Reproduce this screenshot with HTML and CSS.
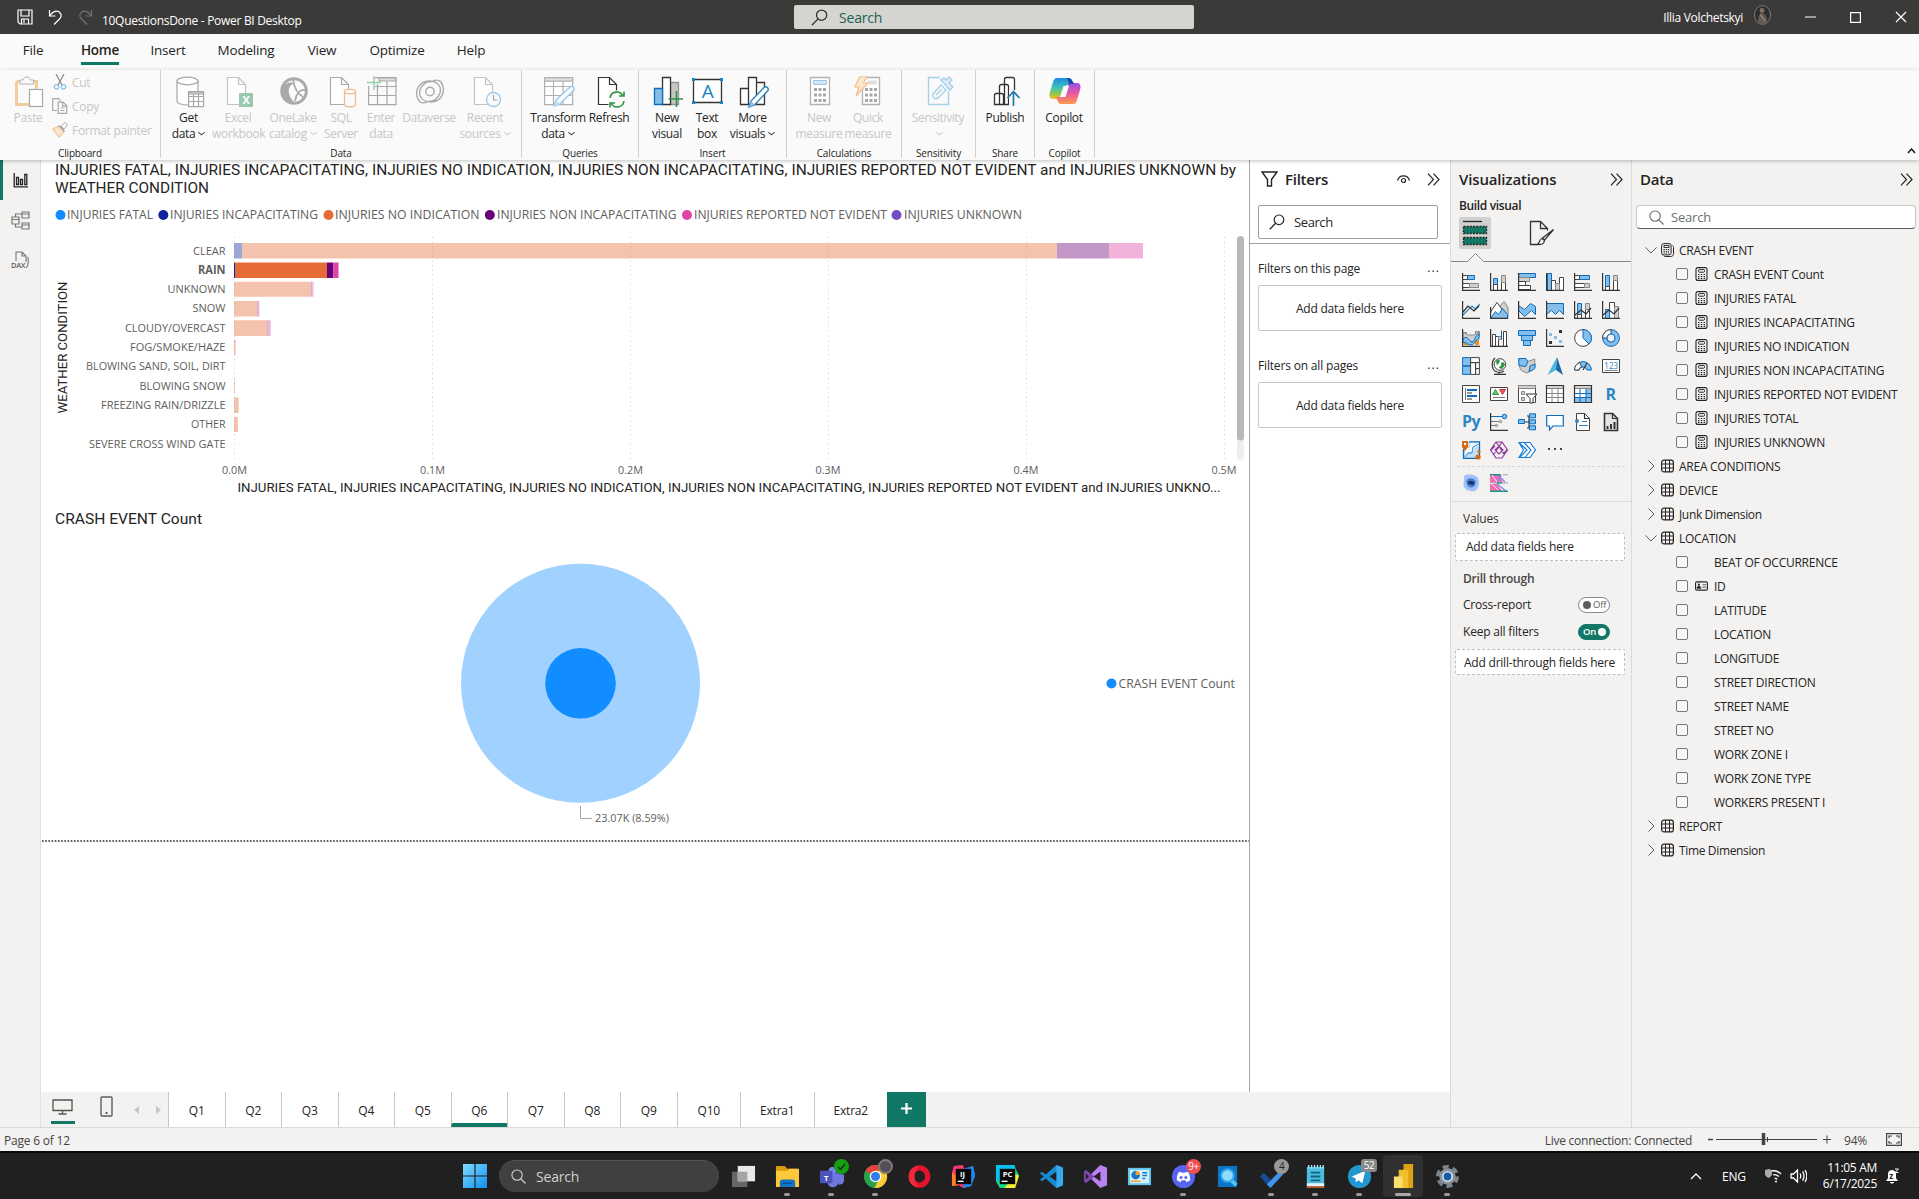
FILE: index.html
```
<!DOCTYPE html>
<html lang="en">
<head>
<meta charset="utf-8">
<title>10QuestionsDone - Power BI Desktop</title>
<link rel="stylesheet" href="styles.css">
</head>
<body>
<svg class="defs" width="0" height="0" aria-hidden="true">
  <symbol id="chev2" viewBox="0 0 13 13"><path d="M1 .7 6.500 6.500 1 12.300M6.500.7 12 6.500 6.500 12.300" fill="none" stroke="#252423" stroke-width="1.200"/></symbol>
  <symbol id="open" viewBox="0 0 14 14"><path d="M1.500 4.500 7 10l5.500-5.500" fill="none" stroke="#605e5c"/></symbol>
  <symbol id="closed" viewBox="0 0 14 14"><path d="M4.500 1.500 10 7l-5.500 5.500" fill="none" stroke="#605e5c"/></symbol>
  <symbol id="table" viewBox="0 0 13 13"><rect x=".6" y=".6" width="11.800" height="11.800" rx="2.500" fill="none" stroke="#252423" stroke-width="1.200"/><path d="M4.500.5v12M8.500.5v12M.5 4.500h12M.5 8.500h12" stroke="#252423" fill="none"/></symbol>
  <symbol id="calc" viewBox="0 0 13 14"><rect x="1" y=".6" width="11" height="12.800" rx="2" fill="none" stroke="#252423" stroke-width="1.100"/><rect x="3.500" y="2.600" width="6" height="2.600" rx=".8" fill="none" stroke="#252423"/><path d="M3 7.500h1.500M5.800 7.500h1.500M8.600 7.500h1.500M3 9.500h1.500M5.800 9.500h1.500M8.600 9.500h1.500M3 11.400h1.500M5.800 11.400h1.500M8.600 11.400h1.500" stroke="#252423" stroke-width="1.100"/></symbol>
  <symbol id="calcs" viewBox="0 0 13 14"><rect x=".6" y=".6" width="9.500" height="11.300" rx="2" fill="none" stroke="#252423"/><path d="M11.500 2.500c1 .5 1 1 1 2v6c0 2-1 3-3 3h-5c-1 0-1.500 0-2-.8" fill="none" stroke="#252423"/><rect x="3" y="2.500" width="5" height="2" fill="none" stroke="#252423" stroke-width=".9"/><path d="M2.500 6.500h6M2.500 8.300h6M2.500 10h6" stroke="#252423" stroke-dasharray="1.300 .9"/></symbol>
  <symbol id="idcard" viewBox="0 0 14 10"><rect x=".6" y=".6" width="12.800" height="8.800" rx="1.500" fill="none" stroke="#252423" stroke-width="1.200"/><circle cx="4.200" cy="3.600" r="1.200" fill="#252423"/><path d="M2.200 7.500V6.200c0-1 4-1 4 0v1.300zM8 3.700h4M8 6.300h4" fill="#252423" stroke="#252423" stroke-width=".8"/></symbol>
  <symbol id="doc" viewBox="0 0 30 32"><path d="M3.500 1.500h11l7 7v20h-18zM14.500 1.500v7h7" fill="#fff" stroke="currentColor" stroke-width="1.200"/></symbol>
  <symbol id="lens" viewBox="0 0 16 16"><circle cx="10" cy="5.800" r="4.800" fill="none" stroke="currentColor" stroke-width="1.200"/><path d="M6.600 9.300.8 15.300" stroke="currentColor" stroke-width="1.300"/></symbol>
  <symbol id="lensr" viewBox="0 0 16 16"><circle cx="6.500" cy="6.500" r="5.500" fill="none" stroke="currentColor" stroke-width="1.200"/><path d="m10.500 10.500 5 5" stroke="currentColor" stroke-width="1.300"/></symbol>
</svg>

<header class="titlebar">
  <div class="quick">
    <svg width="16" height="16" viewBox="0 0 16 16" fill="none" stroke="#fff" stroke-width="1.200"><path d="M1 1h14v14H3l-2-2zM4 1v6h8V1M4.500 15v-5h7v5M7 10v4"/></svg>
    <svg width="15" height="16" viewBox="0 0 15 16" fill="none" stroke="#fff" stroke-width="1.200"><path d="M1.500 1v6h6M1.800 6.500C5 2 9 1 11.500 3.200c3 2.800 1.500 5.300-.5 7.300l-5 5"/></svg>
    <svg width="15" height="16" viewBox="0 0 15 16" fill="none" stroke="#73716f" stroke-width="1.200"><path d="M13.500 1v6h-6M13.200 6.500C10 2 6 1 3.500 3.200c-3 2.800-1.500 5.300.5 7.300l5 5"/></svg>
  </div>
  <div class="doc-title">10QuestionsDone - Power BI Desktop</div>
  <div class="top-search"><svg width="17" height="17"><use href="#lens"/></svg><span>Search</span></div>
  <div class="account">Illia Volchetskyi</div>
  <svg class="avatar" width="17" height="20" viewBox="0 0 17 20"><ellipse cx="8.500" cy="10" rx="8" ry="9.400" fill="#2c2f31" stroke="#8b8a88" stroke-width=".8"/><path d="M4 18c0-6 1-9 4-10 4 1 5 5 5 9-2 3-7 3-9 1z" fill="#655a52"/><circle cx="8" cy="5.500" r="2.400" fill="#8a6d57"/><path d="M6 9l5 7" stroke="#a59b92"/></svg>
  <svg class="win" width="104" height="14" viewBox="0 0 104 14" fill="none" stroke="#fff" stroke-width="1.200"><path d="M1 7h11M92 2l10 10M102 2 92 12"/><rect x="46.600" y="2.600" width="9.800" height="9.800"/></svg>
</header>

<nav class="tabs">
  <span class="t-file">File</span><span class="t-home active">Home</span><span class="t-insert">Insert</span><span class="t-modeling">Modeling</span><span class="t-view">View</span><span class="t-optimize">Optimize</span><span class="t-help">Help</span>
</nav>

<section class="ribbon">
  <div class="group g-clip">
    <div class="btns">
      <div class="btn off b-paste"><svg width="30" height="32" viewBox="0 0 30 32"><path d="M2.500 5.500h20V13M2.500 5.500v23h14" fill="none" stroke="#f3cb9d" stroke-width="3"/><path d="M6 4h3c.5-4 7-4 7.500 0h3v4H6z" fill="#fafafa" stroke="#b5b3b1"/><rect x="15.500" y="13.500" width="13" height="17" fill="#fff" stroke="#a9a7a5" stroke-width="1.200"/></svg>Paste</div>
      <div class="smalls">
        <div><svg width="16" height="16" viewBox="0 0 16 16" fill="none"><path d="m4 0 6 11M12 0 6 11" stroke="#8d8b89" stroke-width="1.300"/><circle cx="4.500" cy="12.800" r="2.200" stroke="#92c4e5" stroke-width="1.300"/><circle cx="11.500" cy="12.800" r="2.200" stroke="#92c4e5" stroke-width="1.300"/></svg>Cut</div>
        <div><svg width="16" height="16" viewBox="0 0 16 16" fill="none" stroke="#a9a7a5" stroke-width="1.200"><path d="M5 12.500H.7V.7h6l2 2"/><path d="M6.200 4.200h5l3.500 3.500v7.600H6.200zM10.500 4.200v4h4M8.500 10h4M8.500 12.500h4" fill="#fff"/></svg>Copy</div>
        <div><svg width="16" height="16" viewBox="0 0 16 16" fill="none"><path d="m9 4 4-3.500L15.500 3 12 7z" stroke="#a9a7a5" fill="#fff"/><path d="m5 5 3-1 4 4-1 3-4 4.500L.7 7z" fill="#fbe3c9" stroke="#edb785"/><path d="m6.500 3.500 6 6" stroke="#a9a7a5" stroke-width="1.400"/></svg>Format painter</div>
      </div>
    </div>
    <div class="glabel">Clipboard</div>
  </div>
  <div class="group g-data">
    <div class="btns">
      <div class="btn b-get"><svg width="30" height="32" viewBox="0 0 30 32" fill="#fff" stroke="#a9a7a5" stroke-width="1.200"><path d="M2 5v20c0 2 4 4 10 4h2V17h9V5"/><ellipse cx="12.500" cy="5" rx="10.500" ry="3.800"/><path d="M13.600 15.600h15v15h-15zM13.600 20.500h15M13.600 25.500h15M18.500 18v12M23.500 18v12"/><path d="M14 16h14v2H14z" fill="#d2d0ce"/></svg>Get<br>data<i class="dd"></i></div>
      <div class="btn off b-excel"><svg width="30" height="32" viewBox="0 0 30 32" color="#c5c3c1"><use href="#doc"/><rect x="15" y="17" width="14" height="14" fill="#9bc8b0"/><text x="22" y="28" class="xl">X</text></svg>Excel<br>workbook</div>
      <div class="btn off b-lake"><svg width="30" height="32" viewBox="0 0 30 32"><circle cx="15" cy="15" r="12.300" fill="#fafafa" stroke="#acaaa8" stroke-width="3"/><path d="M3.500 11c3-4 7-5.500 12-4-4 1.500-6.500 5-5.500 10 .6 4 3 7.500 6 9.800C8 27.500 2.500 21 3.500 11z" fill="#acaaa8"/><path d="M14 3c1 9 5 15 10 18M26 14c-5-1-9 4-10 11" stroke="#acaaa8" stroke-width="1.800" fill="none"/></svg>OneLake<br>catalog<i class="dd"></i></div>
      <div class="btn off b-sql"><svg width="30" height="32" viewBox="0 0 30 32" color="#acaaa8"><use href="#doc"/><path d="M17.500 15.500v13c0 3 11 3 11 0v-13" fill="#fafafa" stroke="#f0bd8f" stroke-width="1.300"/><ellipse cx="23" cy="15.500" rx="5.500" ry="2.200" fill="#fff" stroke="#f0bd8f" stroke-width="1.300"/></svg>SQL<br>Server</div>
      <div class="btn off b-enter"><svg width="30" height="32" viewBox="0 0 30 32" fill="none" stroke="#a9a7a5" stroke-width="1.200"><path d="M8 1.600h21v27H1.600V10M1.600 19.500H29M8 10.500h21M10.500 8v20.500M20 5v23.500"/><path d="M12 2h17v3H12z" fill="#e1dfdd"/><path d="M7 0v14M0 6.500h14" stroke="#98cfa4" stroke-width="1.500"/></svg>Enter<br>data</div>
      <div class="btn off b-dv"><svg width="30" height="32" viewBox="0 0 30 32" fill="none" stroke="#acaaa8" stroke-width="1.400"><circle cx="15" cy="15.500" r="4.200"/><path d="M4 25C-2 16 4 5 14 5c8 0 13 5 11 12-2 6-7 9-11 8M26 6c6 9 0 20-10 20C8 26 3 21 5 14c2-6 7-9 11-8M4 25c3 3 7 2 9 0M26 6c-3-3-7-2-9 0"/></svg>Dataverse</div>
      <div class="btn off b-recent"><svg width="30" height="32" viewBox="0 0 30 32" color="#c5c3c1"><use href="#doc"/><circle cx="22.500" cy="23.500" r="7" fill="#f7fbfe" stroke="#a3cbe6" stroke-width="1.400"/><path d="M22.500 19v5h4" fill="none" stroke="#a9a7a5" stroke-width="1.200"/></svg>Recent<br>sources<i class="dd"></i></div>
    </div>
    <div class="glabel">Data</div>
  </div>
  <div class="group g-queries">
    <div class="btns">
      <div class="btn b-trans"><svg width="32" height="32" viewBox="0 0 32 32" fill="#fff" stroke="#b3b1af" stroke-width="1.200"><path d="M1.600 1.600h28v27h-28zM1.600 10.500h28M1.600 19.500h28M10.500 5v23.500M20 5v23.500"/><path d="M1.600 1.600h28v3.500h-28z" fill="#e1dfdd"/><path d="m11 30 2-6 14.500-13.500c2-1 4.500 1 3.500 3.500L17 28z" fill="#f5faff" stroke="#9cc7e6" stroke-width="1.400"/><path d="m11 30 2-6 4 4z" fill="#bcdcf3" stroke="none"/></svg>Transform<br>data<i class="dd"></i></div>
      <div class="btn b-refresh"><svg width="30" height="32" viewBox="0 0 30 32" color="#333"><use href="#doc"/><path d="M13.500 14.500h16v17h-16z" fill="#fafafa"/><path d="M15 22c1-7 10-8 13-2M29 15.500V20h-5M29 25c-1 7-10 8-13 2M15 31.500V27h5" fill="none" stroke="#2d9442" stroke-width="1.600"/></svg>Refresh</div>
    </div>
    <div class="glabel">Queries</div>
  </div>
  <div class="group g-insert">
    <div class="btns">
      <div class="btn b-newv"><svg width="30" height="32" viewBox="0 0 30 32" stroke-width="1.300"><path d="M17.500 6.500h8v22h-8z" fill="#c8c6c4" stroke="#979593"/><path d="M9.500 1.500h8v27h-8z" fill="#fff" stroke="#333"/><path d="M1.500 12.500h8v16h-8z" fill="#83beec" stroke="#0f6cbd"/><path d="M23.500 15v16M15.500 23H30" stroke="#2d9442" stroke-width="1.600"/></svg>New<br>visual</div>
      <div class="btn b-text"><svg width="32" height="32" viewBox="0 0 32 32"><path d="M1.500 3.500h28v23h-28z" fill="#fff" stroke="#333" stroke-width="1.300"/><path d="M0 2h3v3H0zM28 2h3v3h-3zM0 25h3v3H0zM28 25h3v3h-3z" fill="#1683cc"/><text x="15.500" y="22" class="tb">A</text></svg>Text<br>box</div>
      <div class="btn b-more"><svg width="30" height="32" viewBox="0 0 30 32" stroke-width="1.300" fill="#fff" stroke="#333"><path d="M17.500 6.500h8v22h-8zM9.500 1.500h8v27h-8zM1.500 12.500h8v16h-8z"/><path d="m10 31 2-6 13.500-14c2-1 4.500 1 3.500 3.500L15.500 29z" stroke="#2c7fba" stroke-width="1.400"/><path d="m10 31 2-6 4 4z" fill="#83beec" stroke="none"/></svg>More<br>visuals<i class="dd"></i></div>
    </div>
    <div class="glabel">Insert</div>
  </div>
  <div class="group g-calc">
    <div class="btns">
      <div class="btn off b-newm"><svg width="30" height="32" viewBox="0 0 30 32"><path d="M5.500 1.500h19v27h-19z" fill="#fff" stroke="#b3b1af" stroke-width="1.300"/><path d="M8.500 4.500h13v4h-13z" fill="#cfe5f6" stroke="#9cc7e6"/><path d="M9 13.500h12M9 19h12M9 24.500h12" stroke="#a9a7a5" stroke-width="3" stroke-dasharray="3 1.500"/></svg>New<br>measure</div>
      <div class="btn off b-quick"><svg width="30" height="32" viewBox="0 0 30 32"><path d="M8.500 1.500h17v27h-17z" fill="#fff" stroke="#b3b1af" stroke-width="1.300"/><path d="M14 4.500h9v4h-9z" fill="#e1dfdd"/><path d="M11 13.500h12M11 19h12M11 24.500h12" stroke="#a9a7a5" stroke-width="3" stroke-dasharray="3 1.500"/><path d="M6 0h7L9.500 7H14L2 20l3-9H1z" fill="#fbe9cf" stroke="#efbf8c" stroke-width="1.200"/></svg>Quick<br>measure</div>
    </div>
    <div class="glabel">Calculations</div>
  </div>
  <div class="group g-sens">
    <div class="btns">
      <div class="btn off b-sens"><svg width="30" height="32" viewBox="0 0 30 32" fill="none" stroke="#a6cfe8" stroke-width="1.400"><path d="M16 1.500H4.500v27h20V15"/><path d="m9 18 8-9 5 5-8 8c-4 2-6-1-5-4zM12 19l6-6" fill="#fafafa"/><path d="m17 4 9 10 3-3-4-4 3-3-3-3-3 3-2-2z" fill="#ddeef9"/></svg>Sensitivity<br><i class="dd"></i></div>
    </div>
    <div class="glabel">Sensitivity</div>
  </div>
  <div class="group g-share">
    <div class="btns">
      <div class="btn b-pub"><svg width="30" height="32" viewBox="0 0 30 32" fill="#fff" stroke="#333" stroke-width="1.300"><path d="M13.500 28.500v-25c0-1.500.5-2 2-2h6c1.500 0 2 .5 2 2v25zM8.500 28.500v-18c0-1.500.5-2 2-2h5c1.500 0 2 .5 2 2v18zM3.500 28.500v-9c0-1.500.5-2 2-2h5c1.500 0 2 .5 2 2v9z"/><path d="M18 14h11v17H18z" fill="#fafafa" stroke="none"/><path d="M22.500 30V15.500M16.500 22l6-6.500 6 6.500" fill="none" stroke="#2476ad" stroke-width="1.700"/></svg>Publish</div>
    </div>
    <div class="glabel">Share</div>
  </div>
  <div class="group g-cop">
    <div class="btns">
      <div class="btn b-cop"><svg width="32" height="32" viewBox="0 0 32 32"><defs><linearGradient id="ca" x1="0" y1="0" x2="0" y2="1"><stop offset="0" stop-color="#1c8ae8"/><stop offset=".45" stop-color="#3ec2b8"/><stop offset=".75" stop-color="#8bc848"/><stop offset="1" stop-color="#ffc21c"/></linearGradient><linearGradient id="cb" x1="0" y1="0" x2="0" y2="1"><stop offset="0" stop-color="#9d4df0"/><stop offset=".5" stop-color="#e9589f"/><stop offset="1" stop-color="#ff9a4e"/></linearGradient></defs><path d="M8 2h12c3 0 3 3 5 7h-6c-2 0-3 1-3.500 3L13 20c-1 3-2 3-4 3H4c-4 0-4-4-3-7l3-10c1-3 2-4 4-4z" fill="url(#ca)"/><path d="M24 28H12c-3 0-3-3-5-7h6c2 0 3-1 3.500-3L19 10c1-3 2-3 4-3h5c4 0 4 4 3 7l-3 10c-1 3-2 4-4 4z" fill="url(#cb)"/><path d="M18 2c4 0 5 2 7 6h-5z" fill="#174ea8"/><path d="m14.500 10-3.500 11h5.500L20 10z" fill="#fafafa"/></svg>Copilot</div>
    </div>
    <div class="glabel">Copilot</div>
  </div>
  <svg class="collapse" width="9" height="6" viewBox="0 0 9 6"><path d="m1 5 3.500-4L8 5" fill="none" stroke="#252423" stroke-width="1.600"/></svg>
</section>

<main class="work">
  <aside class="rail">
    <div class="rail-item on"><svg width="16" height="15" viewBox="0 0 16 15" fill="none" stroke="#252423" stroke-width="1.300"><path d="M1.200 0v13.800H15M3.500 4.500h2v7h-2zM7.500 6.500h2v5h-2zM11.800 1.500h2v10h-2z"/></svg></div>
    <div class="rail-item"><svg width="19" height="19" viewBox="0 0 19 19" fill="none" stroke="#7a7876" stroke-width="1.200"><path d="M1 6h7v7H1zM1 8.500h7M11 1h7v6h-7zM11 3h7M11 12h7v6h-7zM11 14h7M4.500 6V3H11M4.500 13v3H11"/></svg></div>
    <div class="rail-item"><svg width="19" height="19" viewBox="0 0 19 19" fill="none" stroke="#7a7876" stroke-width="1.100"><path d="M5 10V1h6l4 4v6M11 1v4h4M16.500 6c1 1 1 6 0 9l-1.500 2"/><text x="0" y="17" class="dax">DAX</text></svg></div>
  </aside>

  <section class="center">
    <div class="panes">
      <svg class="canvas" width="1208" height="932" viewBox="41 160 1208 932">
        <g class="title"><text x="55" y="175" textLength="1181" lengthAdjust="spacingAndGlyphs">INJURIES FATAL, INJURIES INCAPACITATING, INJURIES NO INDICATION, INJURIES NON INCAPACITATING, INJURIES REPORTED NOT EVIDENT and INJURIES UNKNOWN by</text>
        <text x="55" y="193" textLength="154" lengthAdjust="spacingAndGlyphs">WEATHER CONDITION</text>
        <text x="55" y="524" textLength="147" lengthAdjust="spacingAndGlyphs">CRASH EVENT Count</text></g>
        <circle cx="60.500" cy="215" r="5" fill="#118dff"/><circle cx="163.300" cy="215" r="5" fill="#12239e"/><circle cx="328.500" cy="215" r="5" fill="#e66c37"/><circle cx="489.800" cy="215" r="5" fill="#6b007b"/><circle cx="687" cy="215" r="5" fill="#e044a7"/><circle cx="896.500" cy="215" r="5" fill="#744ec2"/>
        <g class="legend">
          <text x="67" y="219" textLength="86" lengthAdjust="spacingAndGlyphs">INJURIES FATAL</text>
          <text x="170" y="219" textLength="148" lengthAdjust="spacingAndGlyphs">INJURIES INCAPACITATING</text>
          <text x="335" y="219" textLength="144.500" lengthAdjust="spacingAndGlyphs">INJURIES NO INDICATION</text>
          <text x="497" y="219" textLength="179.500" lengthAdjust="spacingAndGlyphs">INJURIES NON INCAPACITATING</text>
          <text x="694" y="219" textLength="193" lengthAdjust="spacingAndGlyphs">INJURIES REPORTED NOT EVIDENT</text>
          <text x="904" y="219" textLength="118" lengthAdjust="spacingAndGlyphs">INJURIES UNKNOWN</text>
          <text x="1118.500" y="688" textLength="116.500" lengthAdjust="spacingAndGlyphs">CRASH EVENT Count</text>
        </g>
        <path d="M234.500 237v223M432.500 237v223M630.500 237v223M828.500 237v223M1026.500 237v223M1224.500 237v223" stroke="#d0cecc" stroke-dasharray="1 3.700"/>
        <g class="dim">
          <path d="M242 243h815v15.500H242zM234 281.800h77.500v15H234zM234 301h23.500v15.500H234zM234 320.200h33.500V336H234zM234 340h1.700v15H234zM234 378.500h.8v15h-.8zM234 397.500h4.700V413H234zM234 417h4v15h-4z" fill="#e66c37"/>
          <path d="M234 243h8v15.500h-8z" fill="#12239e"/>
          <path d="M1057 243h52v15.500h-52zM311.300 281.800h1v15h-1zM257.300 301h1v15.500h-1zM267.300 320.200h1.200V336h-1.200z" fill="#6b007b"/>
          <path d="M1109 243h34v15.500h-34zM312.300 281.800h1.300v15h-1.300zM258.300 301h1.200v15.500h-1.200zM268.500 320.200h2.200V336h-2.200z" fill="#e044a7"/>
        </g>
        <path d="M235 262.500h92v15.500h-92z" fill="#e66c37"/><path d="M234 262.500h1V278h-1z" fill="#12239e"/><path d="M327 262.500h6.500V278H327z" fill="#6b007b"/><path d="M333.500 262.500h5V278h-5z" fill="#e044a7"/>
        <g class="cats">
          <text x="193" y="255" textLength="32.500" lengthAdjust="spacingAndGlyphs">CLEAR</text>
          <text x="198" y="274" textLength="27.500" lengthAdjust="spacingAndGlyphs" font-weight="700">RAIN</text>
          <text x="167.500" y="293" textLength="58" lengthAdjust="spacingAndGlyphs">UNKNOWN</text>
          <text x="192.500" y="312" textLength="33" lengthAdjust="spacingAndGlyphs">SNOW</text>
          <text x="125" y="332" textLength="100.500" lengthAdjust="spacingAndGlyphs">CLOUDY/OVERCAST</text>
          <text x="130" y="351" textLength="95.500" lengthAdjust="spacingAndGlyphs">FOG/SMOKE/HAZE</text>
          <text x="86" y="370" textLength="139.500" lengthAdjust="spacingAndGlyphs">BLOWING SAND, SOIL, DIRT</text>
          <text x="139.500" y="390" textLength="86" lengthAdjust="spacingAndGlyphs">BLOWING SNOW</text>
          <text x="101" y="409" textLength="124.500" lengthAdjust="spacingAndGlyphs">FREEZING RAIN/DRIZZLE</text>
          <text x="191" y="428" textLength="34.500" lengthAdjust="spacingAndGlyphs">OTHER</text>
          <text x="89" y="448" textLength="136.500" lengthAdjust="spacingAndGlyphs">SEVERE CROSS WIND GATE</text>
          <text x="222" y="474" textLength="25" lengthAdjust="spacingAndGlyphs">0.0M</text>
          <text x="420" y="474" textLength="25" lengthAdjust="spacingAndGlyphs">0.1M</text>
          <text x="618" y="474" textLength="25" lengthAdjust="spacingAndGlyphs">0.2M</text>
          <text x="815.500" y="474" textLength="25" lengthAdjust="spacingAndGlyphs">0.3M</text>
          <text x="1013.500" y="474" textLength="25" lengthAdjust="spacingAndGlyphs">0.4M</text>
          <text x="1211.500" y="474" textLength="25" lengthAdjust="spacingAndGlyphs">0.5M</text>
          <text x="595" y="822" textLength="74" lengthAdjust="spacingAndGlyphs">23.07K (8.59%)</text>
        </g>
        <g class="axis"><text x="237.500" y="492" textLength="983" lengthAdjust="spacingAndGlyphs">INJURIES FATAL, INJURIES INCAPACITATING, INJURIES NO INDICATION, INJURIES NON INCAPACITATING, INJURIES REPORTED NOT EVIDENT and INJURIES UNKNO...</text>
        <text transform="translate(67 413.500) rotate(-90)" textLength="132" lengthAdjust="spacingAndGlyphs">WEATHER CONDITION</text></g>
        <rect x="1237" y="236" width="7" height="224" rx="3.500" fill="#efeeed"/><rect x="1237" y="236" width="7" height="204.500" rx="3.500" fill="#b8b8b8"/>
        <circle cx="580.500" cy="683.300" r="119.500" fill="#a0d1ff"/><circle cx="580.500" cy="683.300" r="35.300" fill="#118dff"/>
        <path d="M580.500 806v12.500H592" fill="none" stroke="#a8a6a4"/>
        <circle cx="1111.500" cy="683.500" r="5" fill="#118dff"/>
        <path d="M42 841h1207" stroke="#252423" stroke-width="1.600" stroke-dasharray="1.600 1.600"/>
      </svg>
      <aside class="filters">
        <div class="pane-head"><svg width="17" height="16" viewBox="0 0 17 16"><path d="M1 1h15l-5.500 7.500V15h-4V8.500z" fill="none" stroke="#252423" stroke-width="1.400"/></svg><h2>Filters</h2><svg class="eye" width="13" height="9" viewBox="0 0 13 9" fill="none" stroke="#252423" stroke-width="1.200"><path d="M.6 5.500C2-.8 11-.8 12.400 5.500"/><circle cx="6.500" cy="5.500" r="2"/></svg><svg width="13" height="13"><use href="#chev2"/></svg></div>
        <div class="fsearch"><svg width="16" height="16"><use href="#lens"/></svg>Search</div>
        <div class="fbody">
          <div class="fhead"><span>Filters on this page</span><b>...</b></div><div class="fdrop">Add data fields here</div>
          <div class="fhead second"><span>Filters on all pages</span><b>...</b></div><div class="fdrop">Add data fields here</div>
        </div>
      </aside>
    </div>
    <div class="pages">
      <div class="views">
        <div class="v-desk"><svg width="21" height="16" viewBox="0 0 21 16" fill="none" stroke="#555351" stroke-width="1.300"><path d="M1 1h19v10.500H1zM10.500 11.500v3M6.500 15h8"/></svg></div>
        <svg class="v-phone" width="13" height="21" viewBox="0 0 13 21" fill="none" stroke="#605e5c" stroke-width="1.400"><rect x="1" y="1" width="11" height="19" rx="1"/><path d="M5.500 17h2" stroke-width="2"/></svg>
        <svg class="v-arrows" width="28" height="8" viewBox="0 0 28 8" fill="#c8c6c4"><path d="M5 0v8L0 4zM22 0v8l5-4z"/></svg>
      </div>
      <div class="pt">Q1</div><div class="pt">Q2</div><div class="pt">Q3</div><div class="pt">Q4</div><div class="pt">Q5</div><div class="pt cur">Q6</div><div class="pt">Q7</div><div class="pt">Q8</div><div class="pt">Q9</div><div class="pt q10">Q10</div><div class="pt ex">Extra1</div><div class="pt ex">Extra2</div>
      <div class="add"><svg width="11" height="11" viewBox="0 0 11 11"><path d="M5.500 0v11M0 5.500h11" stroke="#fff" stroke-width="2.200"/></svg></div>
    </div>
  </section>

  <aside class="viz">
    <div class="pane-head"><h2>Visualizations</h2><svg class="right" width="13" height="13"><use href="#chev2"/></svg></div>
    <div class="build">Build visual</div>
    <div class="vtabs">
      <div class="vtab sel"><svg width="26" height="26" viewBox="0 0 26 26"><path d="M1 1.500h19" stroke="#252423" stroke-width="1.300"/><path d="M1.500 6.500h23v7h-23zM1.500 17.500h23v7h-23z" fill="#117865" stroke="#252423" stroke-width="1.300" stroke-dasharray="2 1.200"/></svg></div>
      <div class="vtab"><svg width="26" height="26" viewBox="0 0 26 26" fill="none" stroke="#333" stroke-width="1.300"><path d="M9 24.500H2.500v-23h10l7 7v2M12.500 1.500v7h7"/><path d="m25.500 9.500-9 10.500-2-2zM9 24.500c3-1 2-5 5-6l2.500 2c-.5 4-3 4-7.500 4z" fill="#fff"/></svg></div>
    </div>
    <svg class="notch" width="180" height="9" viewBox="0 0 180 9"><path d="M0 8.500h16.500l8-8 8 8H180" fill="none" stroke="#8a8886"/></svg>
    <div class="icons">
      <svg viewBox="0 0 18 18"><path d="M5.500 2.500h7v4h-7z" class="b"/><path d="M.5 2.500h5v4h-5zM.5 10.500h7v4h-7z" class="w"/><path d="M7.500 10.500h9v4h-9z" class="g"/><path d="M.6 0v17.400H18" class="k"/></svg>
      <svg viewBox="0 0 18 18"><path d="M3.500 5.500h4v6h-4z" class="b"/><path d="M3.500 11.500h4v6h-4zM11.500 9.500h4v8h-4z" class="w"/><path d="M11.500 2.500h4v7h-4z" class="g"/><path d="M.6 0v17.400H18" class="k"/></svg>
      <svg viewBox="0 0 18 18"><path d="M.5.500h17v4H.5z" class="b"/><path d="M.5 4.500h11v4H.5z" class="g"/><path d="M.5 8.500h7v4h-7zM.5 12.500h12v4H.5z" class="w"/><path d="M.6 0v17.400H18" class="k"/></svg>
      <svg viewBox="0 0 18 18"><path d="M1.500.5h4v17h-4z" class="b"/><path d="M5.500 7.500h4v10h-4zM13.500 4.500h4v13h-4z" class="w"/><path d="M9.500 10.500h4v7h-4z" class="g"/><path d="M.6 0v17.400H18" class="k"/></svg>
      <svg viewBox="0 0 18 18"><path d="M5.500 2.500h10v4h-10z" class="b"/><path d="M.5 2.500h5v4h-5zM.5 10.500h10v4H.5z" class="w"/><path d="M10.500 10.500h5v4h-5z" class="g"/><path d="M.6 0v17.400H18" class="k"/></svg>
      <svg viewBox="0 0 18 18"><path d="M3.500 2.500h4v11h-4z" class="b"/><path d="M3.500 13.500h4v4h-4zM11.500 7.500h4v10h-4z" class="w"/><path d="M11.500 2.500h4v5h-4z" class="g"/><path d="M.6 0v17.400H18" class="k"/></svg>

      <svg viewBox="0 0 18 18"><path d="m1 14 9-9 3 3 5-5" class="bl"/><path d="m1 11 5-6 6 5 5-5" class="k"/><path d="M.6 0v17.400H18" class="k"/></svg>
      <svg viewBox="0 0 18 18"><path d="m8 7 6-6.500 4 6v11h-7z" class="g"/><path d="M.5 11 7 1.500 14 11l-3 6H.5z" class="w"/><path d="m.5 17.500 5-7 3 3 4-6 5 6v4z" class="b"/><path d="M.6 6v11.400H18" class="k"/></svg>
      <svg viewBox="0 0 18 18"><path d="m.5 4.500 6 4 6-6 5 3v8l-4-4-7 6-6-6z" class="b"/><path d="M.6 0v17.400H18" class="k"/></svg>
      <svg viewBox="0 0 18 18"><path d="M.5 2.500h17v11l-4-4-4 4-4-4-5 4z" class="b"/><path d="M.6 0v17.400H18" class="k"/></svg>
      <svg viewBox="0 0 18 18"><path d="M3.500 2.500h4v11h-4z" class="b"/><path d="M3.500 13.500h4v4h-4zM11.500 8.500h4v9h-4z" class="w"/><path d="M11.500 2.500h4v6h-4z" class="g"/><path d="m1 14 6-5 5 4 5-6M.6 0v17.400H18" class="k"/></svg>
      <svg viewBox="0 0 18 18"><path d="M7.500 1.500h5v16h-5z" class="w"/><path d="M3.500 8.500h4v9h-4z" class="b"/><path d="M12.500 5.500h4v12h-4z" class="g"/><path d="m1 14 6-5 5 4 5-6M.6 0v17.400H18" class="k"/></svg>

      <svg viewBox="0 0 18 18"><path d="M1.500 3.500h3v4h-3zM13.500 2.500h4v4h-4z" class="g"/><path d="M2 11h5v5H2zM13 11h4v5h-4z" fill="#f28c1d"/><path d="m1 3 5 3 6 0 5-3v5l-5 5H6L1 9z" class="g"/><path d="M1 10c5-5 6 3 9 3s3-8 7-8v5c-4 0-4 6-8 6s-5-4-8-2z" class="b"/><path d="M.6 0v17.400H18" class="k"/></svg>
      <svg viewBox="0 0 18 18"><path d="M2.500 5.500h3v12h-3zM5.500 7.500h3v10h-3z" class="w"/><path d="M8.500 7.500h3v3h-3z" class="g"/><path d="M11.500 1.500v9" class="b"/><path d="M13.500 2.500h3v15h-3z" class="w"/><path d="M.6 0v17.400H18" class="k"/></svg>
      <svg viewBox="0 0 18 18"><path d="M.5 1.500h17v5H.5zM3.500 6.500h11v5h-11zM5.500 11.500h7v5h-7z" class="b"/></svg>
      <svg viewBox="0 0 18 18"><path d="M3 4h3v3H3zM8 7h3v3H8zM13 11h3v3h-3z" fill="#83beec"/><path d="M13 1h3v3h-3zM3 12h3v3H3z" fill="#333"/><path d="M.6 0v17.400H18" class="k"/></svg>
      <svg viewBox="0 0 18 18"><circle cx="9" cy="9" r="8.400" class="w"/><path d="M9 .6a8.400 8.400 0 0 1 6 14.300L9 9z" class="b"/></svg>
      <svg viewBox="0 0 18 18"><circle cx="9" cy="9" r="8.400" class="b"/><path d="M9 9 .6 9A8.400 8.400 0 0 1 9 .6z" class="w"/><circle cx="9" cy="9" r="4" fill="#f3f2f1" stroke="#0f6cbd" stroke-width="1.200"/></svg>

      <svg viewBox="0 0 18 18"><path d="M.6.6h8v8.400h-8zM.6 9h8v8.400h-8z" class="b"/><path d="M8.600.6h8.800v5H8.600zM8.600 5.600h5v11.800h-5zM13.600 5.600h3.800v6h-3.800zM13.600 11.600h3.800v5.800h-3.800z" class="w"/></svg>
      <svg viewBox="0 0 18 18"><circle cx="10" cy="7.500" r="5.800" class="w"/><path d="M6 4c3-3 5 0 3 2s-2 2-2 3zM11 6c3-2 4 1 4 2l-3 4-3-1c0-2 3-1 2-5z" fill="#2d9442"/><path d="M5 1c-4 4-4 12 2 14 3 .8 5 .4 7-1M9 15v2.500M4 17.400h12" class="k"/></svg>
      <svg viewBox="0 0 18 18"><path d="M.8 1.500h7l2 3 7-2.500v8c-2 4-5 3-7 6-5-1-8-3-8-6z" class="g"/><path d="M.8 1.500h7l2 3-2 5-7-1zM12 9l5-2v4c-2 3-4 2-6 4z" class="b"/></svg>
      <svg viewBox="0 0 18 18"><path d="M11 0 1.500 18 10 13z" fill="#4cb8df"/><path d="m11 0 6 18-7-5z" fill="#1769a6"/></svg>
      <svg viewBox="0 0 18 18"><path d="M.6 13a8.400 8.400 0 0 1 16.800 0h-4.500a4 4 0 0 0-7.800 0z" class="b"/><path d="M.6 13c0-4 2-6 5-7.500l2 4c-2 1-2.500 2-2.500 3.500z" class="w"/><path d="m9 13 4-7" class="k" stroke-width="2"/></svg>
      <svg viewBox="0 0 18 18"><path d="M.5 2.500h17v13H.5z" class="w"/><text x="9" y="11.500" class="n123">123</text><path d="M2.500 13.500h13" stroke="#777" stroke-width=".9"/></svg>

      <svg viewBox="0 0 18 18"><path d="M.5.500h17v17H.5z" class="w"/><path d="M3.500 3v12" stroke="#777"/><path d="M5 5h10M5 11h10" stroke="#0f6cbd" stroke-width="2"/><path d="M5 8h5M5 14h5" class="k"/></svg>
      <svg viewBox="0 0 18 18"><path d="M.5 2.500h17v13H.5z" class="w"/><path d="m2.500 9.500 3-5 3 5z" fill="#7cc389" stroke="#2d9442"/><path d="m9.500 4.500 3 5 3-5z" fill="#e65b5b" stroke="#d13438"/><path d="M3 12.500h12" stroke="#777"/></svg>
      <svg viewBox="0 0 18 18"><path d="M.5.500h17v17H.5z" class="w"/><path d="M.5.500h17v3H.5zM3.500 6.500h3v3h-3zM3.500 12.500h3v3h-3z" class="g"/><path d="M8 9h11l-4 4.500v4.500h-3v-4.500z" fill="#fff" stroke="#333"/></svg>
      <svg viewBox="0 0 18 18"><path d="M.5.500h17v17H.5z" class="w"/><path d="M.5.500h17v3H.5z" class="g"/><path d="M6 4v13M12 4v13M1 8.500h16M1 12.500h16" stroke="#888"/><path d="M.5.500h17v17H.5z" class="k"/></svg>
      <svg viewBox="0 0 18 18"><path d="M.5.500h17v17H.5z" class="w"/><path d="M12 4h5v13H1v-4h11z" fill="#83beec"/><path d="M.5.500h17v3H.5z" class="g"/><path d="M6 4v13M12 4v13M1 8.500h16M1 12.500h16" stroke="#0f6cbd"/><path d="M.5.500h17v17H.5z" class="k"/></svg>
      <svg viewBox="0 0 18 18"><text x="8.500" y="14.500" class="rr">R</text></svg>

      <svg viewBox="0 0 18 18"><text x="9" y="13.500" class="rr">Py</text></svg>
      <svg viewBox="0 0 18 18"><path d="M1 3.500h12" stroke="#0f6cbd"/><circle cx="14.500" cy="3.500" r="2.300" class="b"/><path d="M1 8.500h8M1 12.500h5" stroke="#777"/><circle cx="10.500" cy="8.500" r="1.200" class="g"/><circle cx="6.500" cy="12.500" r="1.200" class="g"/><path d="M.6 0v17.400H18" class="k"/></svg>
      <svg viewBox="0 0 18 18"><path d="M6 9h5M11 3v12M9 3h3M9 15h3" class="k"/><path d="M.5 6.500h6v4h-6zM11.500.8h6v4h-6zM11.500 6.800h6v4h-6zM11.500 12.800h6v4h-6z" class="b"/></svg>
      <svg viewBox="0 0 18 18"><path d="M.7 2.500h16.600V13H7l-3.500 4V13H.7z" fill="#fff" stroke="#0f6cbd" stroke-width="1.200"/></svg>
      <svg viewBox="0 0 18 18"><path d="M2.500.5h8l5 5v12h-13z" class="w"/><path d="M10.500.5v5h5" class="k"/><circle cx="3" cy="8" r="2" fill="#2c86c6"/><path d="M8 8.500h5M5 12.500h9" stroke="#2c86c6"/></svg>
      <svg viewBox="0 0 18 18"><path d="M2.500.5h8l5 5v12h-13z" fill="#e6e4e2" stroke="#333" stroke-width="1.600"/><path d="M10.500.5v5h5" class="k"/><path d="M5.500 16v-3M9 16v-5M12.500 16V9" stroke="#333" stroke-width="2"/></svg>

      <svg viewBox="0 0 18 18"><path d="M7 .8h10.500v16.500H1.500V8" fill="#c4def4" stroke="#0f6cbd" stroke-width="1.300"/><path d="m3 17 3-6h5l2-5 4-1v-3h-9v5H3z" fill="#f5fafe"/><path d="m3 16 3-4h4l1-6 6-3" fill="none" stroke="#2c86c6"/><path d="M0 0h6v6L3 10 0 6z" fill="#d9680c"/><circle cx="3" cy="3" r="1.200" fill="#fff"/><circle cx="16" cy="16" r="2.600" fill="#d9680c"/><circle cx="17" cy="10.500" r="1.500" fill="#d9680c"/></svg>
      <svg viewBox="0 0 18 18" fill="none" stroke="#8f3b9d" stroke-width="1.200"><path d="m6 1 6 0 5.500 8L12 17H6L.5 9zM6 1l8 12M12 1 4 13M1 9l4-4M17 9l-4 4M9 5l4 4-4 4-4-4z"/></svg>
      <svg viewBox="0 0 18 18" fill="#fff" stroke="#1a7fd6" stroke-width="1.200"><path d="M1 1.500h11l5.500 7.500-5.500 7.500H1L5.500 9zM1 1.500 9 9l-7 7M6 1.500 13 9l-6 7.500"/></svg>
      <svg viewBox="0 0 18 18"><path d="M2 7h2v2H2zM8 7h2v2H8zM14 7h2v2h-2z" fill="#444"/></svg>
    </div>
    <div class="custom">
      <svg width="18" height="18" viewBox="0 0 18 18"><path d="M2 2c4-3 12-1 14 2 2 4 1 11-3 13C8 18 2 16 1.500 11z" fill="#9fc2f8"/><path d="M4.500 6c3-3 8-2 9 1s-1 6-4 6.500S3.500 10 4.500 6z" fill="#4d7ed0"/><path d="M6 8c2-2 5-1 6 0s0 4-2 3-5 0-4-3z" fill="#173a75"/></svg>
      <svg width="18" height="18" viewBox="0 0 18 18"><path d="M0 1h9l4 7-6 1H0zM0 10h7l5 7H0z" fill="#f06fb0"/><path d="m8 1 7 7M11 1 7 9M7 10l9 7" stroke="#8e7ff0" stroke-width="1.500"/><path d="M0 .7h11M0 17.300h18M7 9h5" stroke="#20958a" stroke-width="1.500"/><path d="M13 .7h5M12 9h6M2 9h5" stroke="#bbb" stroke-width="1.500"/><path d="m2 1 5 7M2 10l6 6" stroke="#fff" stroke-width=".8"/></svg>
    </div>
    <div class="wells">
      <div class="wl">Values</div>
      <div class="well">Add data fields here</div>
      <div class="wl drill">Drill through</div>
      <div class="trow"><span>Cross-report</span><div class="tog"><i></i>Off</div></div>
      <div class="trow"><span>Keep all filters</span><div class="tog on">On<i></i></div></div>
      <div class="well dt">Add drill-through fields here</div>
    </div>
  </aside>

  <aside class="data">
    <div class="pane-head"><h2>Data</h2><svg class="right" width="13" height="13"><use href="#chev2"/></svg></div>
    <div class="dsearch"><svg width="15" height="15"><use href="#lensr"/></svg>Search</div>
    <div class="tree">
      <div class="tr"><svg><use href="#open"/></svg><svg class="ti"><use href="#calcs"/></svg>CRASH EVENT</div>
      <div class="tr f"><i></i><svg class="ti"><use href="#calc"/></svg>CRASH EVENT Count</div>
      <div class="tr f"><i></i><svg class="ti"><use href="#calc"/></svg>INJURIES FATAL</div>
      <div class="tr f"><i></i><svg class="ti"><use href="#calc"/></svg>INJURIES INCAPACITATING</div>
      <div class="tr f"><i></i><svg class="ti"><use href="#calc"/></svg>INJURIES NO INDICATION</div>
      <div class="tr f"><i></i><svg class="ti"><use href="#calc"/></svg>INJURIES NON INCAPACITATING</div>
      <div class="tr f"><i></i><svg class="ti"><use href="#calc"/></svg>INJURIES REPORTED NOT EVIDENT</div>
      <div class="tr f"><i></i><svg class="ti"><use href="#calc"/></svg>INJURIES TOTAL</div>
      <div class="tr f"><i></i><svg class="ti"><use href="#calc"/></svg>INJURIES UNKNOWN</div>
      <div class="tr"><svg><use href="#closed"/></svg><svg class="ti"><use href="#table"/></svg>AREA CONDITIONS</div>
      <div class="tr"><svg><use href="#closed"/></svg><svg class="ti"><use href="#table"/></svg>DEVICE</div>
      <div class="tr mixed"><svg><use href="#closed"/></svg><svg class="ti"><use href="#table"/></svg>Junk Dimension</div>
      <div class="tr"><svg><use href="#open"/></svg><svg class="ti"><use href="#table"/></svg>LOCATION</div>
      <div class="tr f"><i></i><svg class="ti"></svg>BEAT OF OCCURRENCE</div>
      <div class="tr f"><i></i><svg class="ti"><use href="#idcard"/></svg>ID</div>
      <div class="tr f"><i></i><svg class="ti"></svg>LATITUDE</div>
      <div class="tr f"><i></i><svg class="ti"></svg>LOCATION</div>
      <div class="tr f"><i></i><svg class="ti"></svg>LONGITUDE</div>
      <div class="tr f"><i></i><svg class="ti"></svg>STREET DIRECTION</div>
      <div class="tr f"><i></i><svg class="ti"></svg>STREET NAME</div>
      <div class="tr f"><i></i><svg class="ti"></svg>STREET NO</div>
      <div class="tr f"><i></i><svg class="ti"></svg>WORK ZONE I</div>
      <div class="tr f"><i></i><svg class="ti"></svg>WORK ZONE TYPE</div>
      <div class="tr f"><i></i><svg class="ti"></svg>WORKERS PRESENT I</div>
      <div class="tr"><svg><use href="#closed"/></svg><svg class="ti"><use href="#table"/></svg>REPORT</div>
      <div class="tr mixed"><svg><use href="#closed"/></svg><svg class="ti"><use href="#table"/></svg>Time Dimension</div>
    </div>
  </aside>
</main>

<footer class="status">
  <span>Page 6 of 12</span>
  <span class="conn">Live connection: Connected</span>
  <svg class="slider" width="124" height="14" viewBox="0 0 124 14" stroke="#444" fill="none"><path d="M1 7.500h5" stroke-width="1.500"/><path d="M9 7.500h101M60.500 5v5M116 7.500h8M120 3.500v8"/><path d="M56.500 1v12" stroke-width="3.500"/></svg>
  <span class="pct">94%</span>
  <svg class="fit" width="16" height="13" viewBox="0 0 16 13" fill="none" stroke="#444" stroke-width="1.200"><path d="M.6.6h14.800v11.800H.6zM3 5V3h3M10 3h3v2M3 8v2h3M10 10h3V8"/></svg>
</footer>

<footer class="taskbar">
  <svg class="start" width="24" height="24" viewBox="0 0 24 24"><defs><linearGradient id="wg" x1="0" y1="0" x2="1" y2="1"><stop offset="0" stop-color="#7fdcff"/><stop offset="1" stop-color="#0f8ff0"/></linearGradient></defs><path d="M0 0h11.400v11.400H0zM12.600 0H24v11.400H12.600zM0 12.600h11.400V24H0zM12.600 12.600H24V24H12.600z" fill="url(#wg)"/></svg>
  <div class="tsearch"><svg width="15" height="15"><use href="#lensr"/></svg>Search</div>
  <div class="apps">
    <div><svg viewBox="0 0 26 26"><path d="M1 8h16v16H1z" fill="#666"/><path d="M7 2h18v16H7z" fill="#e9e9e9"/><path d="M7 8h10v10H7z" fill="#a5a5a5"/></svg></div>
    <div class="run"><svg viewBox="0 0 26 26"><path d="M1 4c0-2 0-2 2-2h7l3 3h10v6H1z" fill="#d99a0b"/><path d="M1 7h12l2-2h10v19H1z" fill="#fcc93a"/><path d="M5 24v-5c0-2 1-3 3-3h10c2 0 3 1 3 3v5z" fill="#1474c4"/><path d="M8 20h10" stroke="#0b4f92" stroke-width="1.500"/></svg></div>
    <div class="run"><svg viewBox="0 0 26 26"><circle cx="14" cy="7" r="4" fill="#7b83eb"/><circle cx="21" cy="9" r="3" fill="#5059c9"/><path d="M9 10h11v9c0 7-11 7-11 0zM20 11h6v6c0 5-5 5-6 3z" fill="#7078e0"/><rect x="1" y="7" width="13" height="13" rx="1" fill="#4b53bc"/><text x="7.500" y="17.500" class="ic">T</text></svg><b class="badge ok"><svg width="9" height="9" viewBox="0 0 9 9"><path d="m1 5 2.500 2.500L8 2" fill="none" stroke="#222" stroke-width="1.400"/></svg></b></div>
    <div class="run"><svg viewBox="0 0 26 26"><circle cx="13" cy="13" r="12" fill="#2ca04b"/><path d="M13 13 2.600 7A12 12 0 0 1 23.400 7z" fill="#e8433a"/><path d="M13 13V7h10.400A12 12 0 0 1 12 25l5-10z" fill="#fccb38"/><circle cx="13" cy="13" r="6" fill="#fff"/><circle cx="13" cy="13" r="4.700" fill="#2f7de8"/></svg><b class="badge ava"></b></div>
    <div><svg viewBox="0 0 26 26"><ellipse cx="13" cy="13" rx="8.500" ry="9" fill="none" stroke="#e2142d" stroke-width="5.500"/><path d="M13 2c-4 3-5 6-5 11s1 8 5 11C-2 25-2 1 13 2z" fill="#f22739"/></svg></div>
    <div><svg viewBox="0 0 26 26"><path d="m3 2 9-1 2 4 9-3 2 10-4 11-8 2-5-3-7 1 2-8-2-6z" fill="#f83b73"/><path d="m14 5 9-3 2 10-4 11-8 2z" fill="#138cf2"/><path d="m1 9 6 4v9l-6 1z" fill="#ff7e27"/><path d="M5 5h16v16H5z" fill="#090909"/><text x="12" y="13.500" class="ic">IJ</text><path d="M7 18h6" stroke="#fff" stroke-width="1.400"/></svg></div>
    <div><svg viewBox="0 0 26 26"><path d="M1 1h19l2 5 3 6-2 6-6 7H5L1 18z" fill="#18d987"/><path d="M1 1h19l1 5L5 19l-4-3z" fill="#09c0ee"/><path d="m21 11 4 1-4 13H10z" fill="#f5ee36"/><path d="M5 5h16v16H5z" fill="#090909"/><text x="13" y="13.500" class="ic">PC</text><path d="M7 18h6" stroke="#fff" stroke-width="1.400"/></svg></div>
    <div><svg viewBox="0 0 26 26"><path d="m18 1 7 3v18l-7 3L7 15l-4 3-2-2 4-3-4-3 2-2 4 3z" fill="#168bd2"/><path d="m18 1 7 3v18l-7 3z" fill="#38a9ed"/><path d="m18 8-7 5 7 5z" fill="#202020"/></svg></div>
    <div><svg viewBox="0 0 26 26"><path d="m18 1 7 3v18l-7 3L6 13z" fill="#b982f0"/><path d="m3 6 15 12V8L3 20l-2-2V8z" fill="#7a48ad"/><path d="m18 8-7 5 7 5zM3 10v6l3-3z" fill="#202020"/></svg></div>
    <div><svg viewBox="0 0 26 26"><path d="M1 4h24v18H1z" fill="#5fc3ef"/><path d="M3 6h20v14H3z" fill="#d4f0fc"/><circle cx="9" cy="11.500" r="4.500" fill="#1678c6"/><path d="M9 11.500V7a4.500 4.500 0 0 1 4.500 4.500z" fill="#f7a223"/><path d="M16 9h5M16 12h5M16 15h3" stroke="#1678c6" stroke-width="1.500"/><path d="M4 18h10" stroke="#f7a223" stroke-width="1.500"/></svg></div>
    <div class="run"><svg viewBox="0 0 26 26"><circle cx="13" cy="13" r="12" fill="#5865f2"/><path d="M6 17C6 12 7 9 9 8l3 1h2l3-1c2 1 3 4 3 9l-4 2-1-2h-4l-1 2z" fill="#fff"/><circle cx="10.500" cy="14" r="1.600" fill="#5865f2"/><circle cx="15.500" cy="14" r="1.600" fill="#5865f2"/></svg><b class="badge red">9+</b></div>
    <div><svg viewBox="0 0 26 26"><path d="M3 2h20v22H3z" fill="#0c73c5"/><path d="m16 16 6 6" stroke="#56c7f5" stroke-width="4"/><circle cx="13" cy="12" r="6.500" fill="#8edcfa" stroke="#2daaf0" stroke-width="2"/></svg></div>
    <div class="run"><svg viewBox="0 0 26 26"><path d="m1 13 4-4 7 7-4 5z" fill="#164d97"/><path d="m8 21 4 4L25 11l-3-4z" fill="#3e94ed"/></svg><b class="badge gray">4</b></div>
    <div class="run"><svg viewBox="0 0 26 26"><path d="M4 3h18v22H4z" fill="#4bbde0"/><path d="M4 23h18v2H4z" fill="#b7551b"/><path d="M4 20h18v3H4z" fill="#e9f4f8"/><path d="M6 1v4M9 1v4M12 1v4M15 1v4M18 1v4M21 1v4" stroke="#b9e8f5" stroke-width="1.300"/><path d="M8 9h10M8 13h10M8 17h10" stroke="#156180" stroke-width="2"/></svg></div>
    <div class="run"><svg viewBox="0 0 26 26"><circle cx="13" cy="13" r="12" fill="#2298d0"/><path d="m5 13 14-6-3 13-4-3-3 2v-4z" fill="#fff"/></svg><b class="badge sq">52</b></div>
    <div class="run cur"><svg viewBox="0 0 26 26"><path d="M13 0h10v25H13z" fill="#dca010"/><path d="M8 6h10v19H8z" fill="#f0bf2d"/><path d="M3 13h9v12H3z" fill="#fbdf6c"/></svg></div>
    <div class="run"><svg viewBox="0 0 26 26"><circle cx="13" cy="13" r="8.500" fill="#8b949c"/><circle cx="13" cy="13" r="10" fill="none" stroke="#7b858d" stroke-width="4" stroke-dasharray="6.200 4.270"/><circle cx="13" cy="13" r="4.800" fill="#0f5fa8" stroke="#e9eef2" stroke-width="1.500"/></svg></div>
  </div>
  <div class="tray">
    <svg width="12" height="8" viewBox="0 0 12 8"><path d="m1 7 5-5 5 5" fill="none" stroke="#fff" stroke-width="1.300"/></svg>
    <span class="eng">ENG</span>
    <svg width="42" height="16" viewBox="0 0 42 16" fill="none" stroke="#fff" stroke-width="1.300"><path d="M7 3c4-1 7 1 9 3M8 7c2-1 4 0 6 1.500M9.500 10.500c1-.5 2 0 2.800.8"/><circle cx="11" cy="13.500" r="1" fill="#fff" stroke="none"/><path d="M0 2l3.500-1L7 2v4c0 2-2 3-3.500 4C2 9 0 8 0 6z" fill="#aaa" stroke="none"/><path d="M26 6h2.500l4-4v12l-4-4H26zM35 5.500c1 1.500 1 3.500 0 5M37.500 3.500c2 2.500 2 6.500 0 9M40 2c2.500 4 2.500 8 0 12"/></svg>
    <div class="clock">11:05 AM<br>6/17/2025</div>
    <svg width="15" height="17" viewBox="0 0 15 17"><path d="M1 13 3 10V6c0-3 2-4 4-4s4 2 4 4v4l2 3zM5 14h4c0 2-4 2-4 0z" fill="#fff"/><text x="6" y="11" class="zz">z</text><path d="M10 1h3.500L10 4.500h3.500" fill="none" stroke="#fff"/></svg>
  </div>
</footer>
</body>
</html>
```
FILE: styles.css
```
* { box-sizing: border-box; }
html, body { margin: 0; height: 100%; overflow: hidden; }
body {
  display: flex; flex-direction: column; width: 1919px; height: 1199px;
  font-family: "Open Sans", "Noto Sans", sans-serif; font-size: 12px; color: #252423; background: #fff;
  letter-spacing: -0.2px; white-space: nowrap;
}
svg { display: block; flex: none; }
h2 { margin: 0; font-size: 15px; font-weight: 600; letter-spacing: -0.25px; }
.defs { position: absolute; }

/* title bar */
.titlebar { height: 34px; flex: none; display: flex; align-items: center; background: #3b3a39; color: #fff; }
.quick { display: flex; gap: 15px; padding-left: 17px; width: 102px; }
.doc-title { width: 692px; padding-top: 7px; letter-spacing: -0.3px; }
.top-search { width: 400px; height: 24px; display: flex; align-items: center; gap: 11px; padding-left: 17px; background: #d4d4d1; border-radius: 2px; color: #333; font-size: 14px; }
.top-search span { color: #215e50; }
.account { flex: none; width: 549px; text-align: right; letter-spacing: -0.3px; }
.avatar { margin: 0 0 4px 11px; }
.win { margin-left: 33px; }

/* ribbon */
.tabs { height: 36px; flex: none; display: flex; background: #fafafa; font-size: 13.500px; line-height: 33px; }
.tabs span { height: 31px; margin-right: 32px; display: flex; justify-content: center; }
.tabs .t-file { width: 22px; margin: 0 37px 0 22px; }
.t-home { width: 38px; }
.t-insert { width: 34px; }
.t-modeling { width: 58px; }
.t-view { width: 30px; }
.t-optimize { width: 56px; }
.t-help { width: 28px; }
.tabs .active { font-weight: 600; border-bottom: 3px solid #117865; }
.ribbon { height: 90px; flex: none; display: flex; background: #fafafa; box-shadow: 0 1px 4px rgba(0,0,0,.25); z-index: 1; }
.group { height: 88px; border-right: 1px solid #d2d0ce; display: flex; flex-direction: column; flex: none; }
.btns { flex: 1; display: flex; }
.glabel { font-size: 10px; line-height: 15px; height: 12px; text-align: center; padding-bottom: 6px; letter-spacing: -0.15px; }
.btn { flex: none; text-align: center; padding-top: 6px; line-height: 16px; letter-spacing: -0.32px; }
.btn > svg { margin: 0 auto 2px; position: relative; left: 1px; }
.off, .smalls { color: #c8c6c4; }
.dd { display: inline-block; width: 5px; height: 5px; margin: 0 1px 3px 4px; border: solid currentColor; border-width: 0 1.500px 1.500px 0; transform: scaleY(.8) rotate(45deg); }
.g-clip { width: 161px; } .g-data { width: 361px; } .g-queries { width: 117px; }
.g-insert { width: 148px; } .g-calc { width: 115px; } .g-sens { width: 74px; }
.g-share { width: 59px; } .g-cop { width: 60px; }
.g-data .btns { padding-left: 4px; }
.g-queries .btns, .g-insert .btns { padding-left: 6px; }
.g-calc .btns { padding-left: 8px; }
.g-sens .btns { padding-left: 7px; }
.b-paste { width: 44px; margin-left: 6px; }
.b-get { width: 47px; } .b-excel { width: 52px; } .b-lake { width: 58px; } .b-sql { width: 38px; } .b-enter { width: 42px; } .b-dv { width: 54px; } .b-recent { width: 58px; }
.b-trans { width: 60px; } .b-refresh { width: 42px; }
.b-newv { width: 44px; } .b-text { width: 36px; } .b-more { width: 55px; }
.b-newm { width: 48px; } .b-quick { width: 50px; } .b-sens { width: 58px; } .b-pub, .b-cop { width: 58px; }
.smalls { padding: 0 0 0 2px; letter-spacing: -0.3px; }
.smalls div { height: 24px; display: flex; align-items: center; gap: 4px; }
.xl { font: 700 11px "Open Sans", sans-serif; fill: #fff; text-anchor: middle; }
.tb { font: 19px "Open Sans", sans-serif; fill: #2183c4; text-anchor: middle; }
.collapse { margin: 78px 0 0 812px; }

/* workspace */
.work { flex: none; height: 968px; display: flex; background: #f3f2f1; border-bottom: 1px solid #dcdad8; }
.rail { width: 41px; border-right: 1px solid #e1dfdd; }
.rail-item { height: 40px; display: flex; align-items: center; justify-content: center; border-left: 3px solid transparent; padding-right: 2px; }
.rail-item.on { border-color: #117865; }
.dax { font: 600 7.500px "Open Sans", sans-serif; fill: #605e5c; stroke: none; letter-spacing: -.3px; }
.center { width: 1409px; display: flex; flex-direction: column; }
.panes { display: flex; height: 932px; background: #fff; }
.canvas { letter-spacing: 0; }
.title { font: 15.500px Roboto, sans-serif; fill: #252423; }
.axis { font: 13px Roboto, sans-serif; fill: #252423; }
.legend { font: 12.500px "Open Sans", sans-serif; fill: #605e5c; }
.cats { font: 11.500px "Open Sans", sans-serif; fill: #605e5c; }
.dim { opacity: .4; }

.filters { width: 201px; border-left: 1px solid #a9a7a5; }
.pane-head { height: 40px; padding: 0 8px 2px; display: flex; align-items: center; }
.filters .pane-head { padding: 0 10px 2px 11px; }
.filters h2 { margin-left: 7px; }
.eye { margin: 0 17px 0 auto; }
.fsearch { width: 180px; height: 34px; margin: 5px 0 4px 8px; border: 1px solid #a19f9d; border-radius: 2px; display: flex; align-items: center; padding-left: 10px; gap: 9px; font-size: 13px; letter-spacing: -0.4px; }
.fbody { border-top: 1px solid #a19f9d; padding: 0 8px; }
.fhead { height: 41px; padding-top: 16px; display: flex; justify-content: space-between; letter-spacing: -0.17px; line-height: 18px; }
.fhead.second { height: 51px; padding-top: 26px; }
.fhead b { font-weight: 400; letter-spacing: 1.100px; margin-right: 2px; line-height: 16px; }
.fdrop { height: 46px; border: 1px solid #c8c6c4; border-radius: 2px; text-align: center; line-height: 45px; }

.pages { height: 35px; display: flex; background: #f3f2f1; }
.views { width: 127px; display: flex; align-items: flex-start; padding: 7px 0 0 10px; }
.v-desk { height: 25px; width: 24px; border-bottom: 3px solid #117865; padding-left: 1px; }
.v-phone { margin: -3px 0 0 25px; }
.v-arrows { margin: 7px 0 0 21px; }
.pt { width: 56.500px; flex: none; background: #fff; border-left: 1px solid #c8c6c4; text-align: center; line-height: 38px; border-bottom: 0 solid #117865; }
.pt.cur { border-bottom-width: 4px; }
.q10 { width: 63.500px; } .pt.ex { width: 73.500px; }
.add { width: 39px; background: #117865; display: flex; align-items: center; justify-content: center; padding-bottom: 2px; }

/* visualizations */
.viz { width: 181px; border-left: 1px solid #dcdad8; }
.viz h2 { letter-spacing: -0.15px; }
.right { margin-left: auto; }
.build { padding-left: 8px; height: 17px; line-height: 12px; font-weight: 600; letter-spacing: -0.35px; }
.vtabs { display: flex; padding-left: 8px; gap: 34px; }
.vtab { width: 32px; height: 32px; padding: 3px; border-radius: 2px; }
.vtab.sel { background: #d2d0ce; }
.notch { margin-top: 4px; }
.icons { display: grid; grid-template-columns: repeat(6, 18px); grid-auto-rows: 18px; gap: 10px; padding: 11px 0 7px 5px; margin: 0 6px 7px; border-bottom: 1px dashed #d8d6d4; }
.icons svg { width: 18px; height: 18px; overflow: visible; }
.b { fill: #83beec; stroke: #0f6cbd; }
.g { fill: #d2d0ce; stroke: #8a8886; }
.w { fill: #fff; stroke: #444; }
.k { fill: none; stroke: #333; stroke-width: 1.200; }
.bl { fill: none; stroke: #2c86c6; stroke-width: 1.200; }
.n123 { font: 8.500px "Open Sans", sans-serif; fill: #2c86c6; text-anchor: middle; letter-spacing: -.2px; }
.rr { font: 700 16px "Open Sans", sans-serif; fill: #2c86c6; text-anchor: middle; letter-spacing: -.5px; }
.custom { display: flex; gap: 10px; padding: 0 0 9px 11px; border-bottom: 1px solid #dcdad8; }
.wells { padding: 8px 6px 0 4px; }
.wl { padding-left: 8px; height: 23px; line-height: 18px; color: #323130; }
.well { height: 28px; border: 1px dashed #c0bebc; background: #fff; border-radius: 2px; line-height: 26px; padding-left: 10px; letter-spacing: -0.22px; }
.wl.drill { font-weight: 600; color: #484644; margin-top: 9px; height: 21px; }
.trow { display: flex; justify-content: space-between; padding: 0 15px 0 8px; height: 27px; align-items: center; }
.tog { width: 32px; height: 16px; border: 1px solid #8a8886; border-radius: 8px; background: #fff; display: flex; align-items: center; gap: 2px; padding-left: 4px; font-size: 9.500px; color: #605e5c; }
.tog i { width: 8px; height: 8px; border-radius: 4px; background: #605e5c; }
.tog.on { background: #117865; border-color: #117865; color: #fff; font-weight: 600; }
.tog.on i { background: #fff; }
.well.dt { height: 26px; line-height: 25px; padding-left: 8px; margin-top: 4px; }

/* data */
.data { width: 288px; border-left: 1px solid #dcdad8; }
.data .pane-head { padding: 0 6px 2px 8px; }
.dsearch { height: 24px; margin: 5px 3px 9px 4px; background: #fff; border: 1px solid #c8c6c4; border-bottom-color: #605e5c; border-radius: 4px; display: flex; align-items: center; gap: 7px; padding-left: 12px; color: #707070; font-size: 13px; }
.tr { height: 24px; display: flex; align-items: center; padding-left: 12px; letter-spacing: -0.26px; }
.tr.mixed { letter-spacing: -0.35px; }
.tr svg { width: 14px; height: 14px; }
.tr .ti { width: 13px; height: 14px; margin: 0 5px 0 3px; }
.tr.f { padding-left: 44px; }
.tr i { width: 12px; height: 12px; border: 1px solid #7a7876; border-radius: 2px; margin-right: 5px; background: #f9f8f7; }
.tr.f .ti { margin: 0 6px 0 2px; }

/* status bar */
.status { height: 23px; flex: none; display: flex; align-items: center; padding: 2px 0 0 4px; background: #f3f2f1; color: #444; }
.conn { margin-left: auto; letter-spacing: -0.25px; }
.slider { margin: 0 13px 3px 15px; }
.pct { width: 24px; margin-right: 18px; }
.fit { margin: 0 17px 3px 0; }

/* taskbar */
.taskbar { height: 48px; flex: none; background: #202020; border-top: 2px solid #0a0a0a; display: flex; align-items: center; color: #fff; }
.start { margin-left: 463px; }
.tsearch { width: 220px; height: 32px; margin: 0 0 0 12px; border-radius: 16px; background: #404040; border-top: 1px solid #555; display: flex; align-items: center; padding-left: 12px; gap: 10px; font-size: 14px; color: #d0d0d0; }
.apps { display: flex; margin-left: 2px; }
.apps > div { width: 40px; height: 42px; margin: 0 2px; display: flex; align-items: center; justify-content: center; position: relative; border-radius: 4px; }
.apps > div > svg { width: 25px; height: 25px; }
.apps .cur { background: #303030; }
.run::after { content: ""; position: absolute; left: 17px; bottom: 1px; width: 6px; height: 3px; border-radius: 2px; background: #999; }
.run.cur::after { width: 16px; left: 12px; background: #aaa; }
.badge { position: absolute; right: 2px; top: 4px; width: 15px; height: 15px; border-radius: 8px; font: 10px/15px "Open Sans", sans-serif; letter-spacing: -.5px; display: flex; align-items: center; justify-content: center; }
.ok { background: #13a10e; } .red { background: #f04f52; } .gray { background: #999; color: #222; }
.ava { background: #554e58; border: 2px solid #817978; }
.sq { background: #888; border-radius: 3px; height: 13px; width: 16px; }
.ic { font: 700 8px "Open Sans", sans-serif; fill: #fff; text-anchor: middle; letter-spacing: 0; }
.tray { margin-left: auto; display: flex; align-items: center; padding-right: 19px; }
.eng { margin: 0 19px 0 20px; }
.clock { text-align: right; line-height: 16px; margin: 0 8px 0 16px; letter-spacing: -0.3px; }
.zz { font: 700 8px "Open Sans", sans-serif; fill: #202020; text-anchor: middle; }
```
